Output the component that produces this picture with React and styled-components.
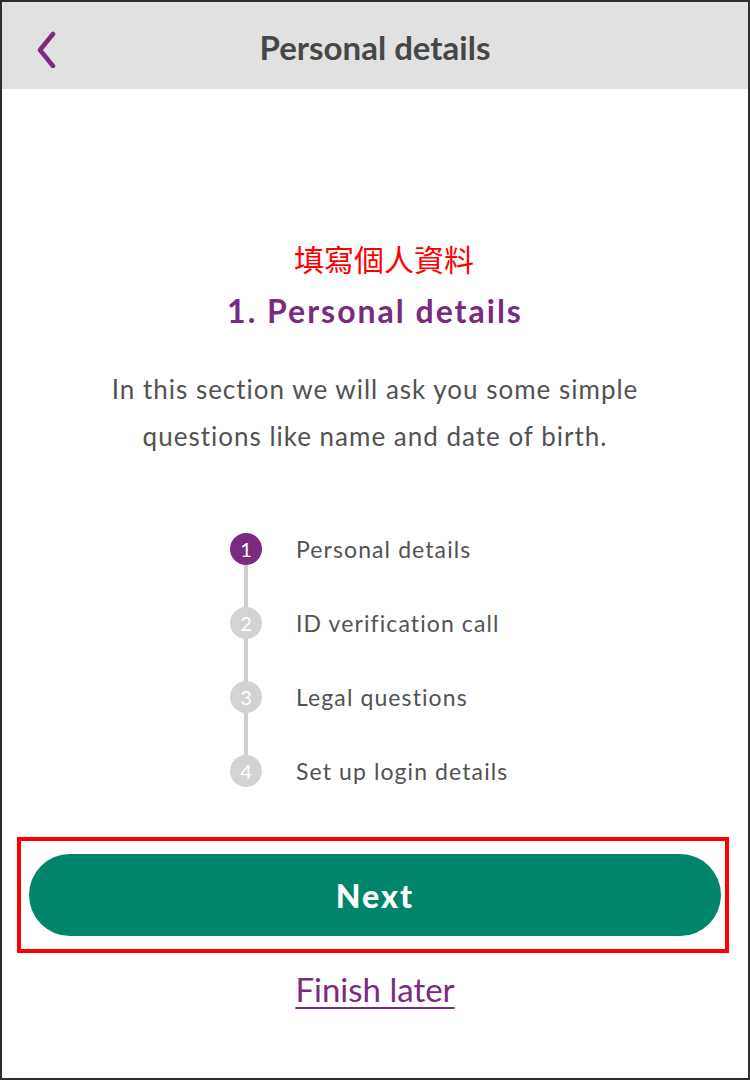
import React from 'react';
import styled, { createGlobalStyle } from 'styled-components';

const GlobalStyle = createGlobalStyle`
  html, body {
    margin: 0;
    padding: 0;
    background: #ffffff;
  }
  body {
    font-family: Lato, "Noto Sans CJK TC", sans-serif;
  }
`;

const Frame = styled.div`
  box-sizing: border-box;
  width: 750px;
  height: 1080px;
  border: 2px solid #2e2e2e;
  display: flex;
  flex-direction: column;
  background: #ffffff;
  overflow: hidden;
`;

const Header = styled.header`
  height: 87px;
  flex: none;
  background: #e1e1e1;
  display: flex;
  align-items: center;
  justify-content: center;
  position: relative;
`;

const BackButton = styled.button`
  position: absolute;
  left: 30px;
  top: 26px;
  width: 30px;
  height: 40px;
  padding: 0;
  border: none;
  background: none;
  cursor: pointer;
`;

const HeaderTitle = styled.h1`
  margin: 2px 0 0;
  font-size: 33px;
  font-weight: 700;
  color: #474747;
`;

const Content = styled.main`
  display: flex;
  flex-direction: column;
  align-items: center;
  padding-top: 151px;
`;

const Notice = styled.p`
  margin: 0 0 0 18px;
  font-family: "Noto Sans CJK TC", sans-serif;
  font-size: 30px;
  line-height: 36px;
  color: #ff0000;
`;

const SectionTitle = styled.h2`
  margin: 15px 0 0;
  font-size: 32px;
  line-height: 40px;
  font-weight: 700;
  letter-spacing: 2px;
  color: #7a2a7f;
`;

const Intro = styled.p`
  margin: 35px 0 0;
  font-size: 26px;
  line-height: 47px;
  letter-spacing: 1px;
  color: #525252;
  text-align: center;
`;

const Steps = styled.ol`
  list-style: none;
  margin: 52px 0 0;
  padding: 0;
  width: 290px;
`;

const Step = styled.li`
  position: relative;
  height: 74px;
  display: flex;
  align-items: center;
  gap: 34px;

  &:not(:last-child)::after {
    content: '';
    position: absolute;
    left: 14px;
    top: 37px;
    width: 4px;
    height: 74px;
    background: #cfcfcf;
  }
`;

const Dot = styled.span`
  position: relative;
  z-index: 1;
  width: 32px;
  height: 32px;
  border-radius: 50%;
  flex: none;
  display: flex;
  align-items: center;
  justify-content: center;
  font-size: 20px;
  color: #ffffff;
  background: ${(props) => (props.active ? '#7a2a7f' : '#d3d3d3')};
`;

const StepLabel = styled.span`
  font-size: 23px;
  letter-spacing: 1.1px;
  color: #525252;
  white-space: nowrap;
`;

const Highlight = styled.div`
  box-sizing: border-box;
  align-self: stretch;
  margin: 29px 19px 0 15px;
  border: 4px solid #ff0000;
  padding: 13px 4px 13px 8px;
`;

const NextButton = styled.button`
  display: block;
  width: 100%;
  height: 82px;
  border: none;
  border-radius: 41px;
  background: #00856a;
  color: #ffffff;
  font-family: Lato, sans-serif;
  font-size: 32px;
  font-weight: 900;
  letter-spacing: 2px;
  cursor: pointer;
`;

const FinishLater = styled.a`
  margin-top: 18px;
  font-size: 33px;
  line-height: 36px;
  color: #7a2a7f;
  text-decoration: underline;
  text-underline-offset: 5px;
  text-decoration-thickness: 2px;
`;

const steps = [
  'Personal details',
  'ID verification call',
  'Legal questions',
  'Set up login details',
];

const App = () => (
  <>
    <GlobalStyle />
    <Frame>
      <Header>
        <BackButton aria-label="Back">
          <svg width="30" height="40" viewBox="0 0 30 40">
            <polyline
              points="21,6 8,22 21,38"
              fill="none"
              stroke="#7a2a7f"
              strokeWidth="4.5"
              strokeLinecap="round"
              strokeLinejoin="round"
            />
          </svg>
        </BackButton>
        <HeaderTitle>Personal details</HeaderTitle>
      </Header>
      <Content>
        <Notice>填寫個人資料</Notice>
        <SectionTitle>1. Personal details</SectionTitle>
        <Intro>
          In this section we will ask you some simple
          <br />
          questions like name and date of birth.
        </Intro>
        <Steps>
          {steps.map((label, i) => (
            <Step key={label}>
              <Dot active={i === 0}>{i + 1}</Dot>
              <StepLabel>{label}</StepLabel>
            </Step>
          ))}
        </Steps>
        <Highlight>
          <NextButton>Next</NextButton>
        </Highlight>
        <FinishLater href="#">Finish later</FinishLater>
      </Content>
    </Frame>
  </>
);

export default App;
